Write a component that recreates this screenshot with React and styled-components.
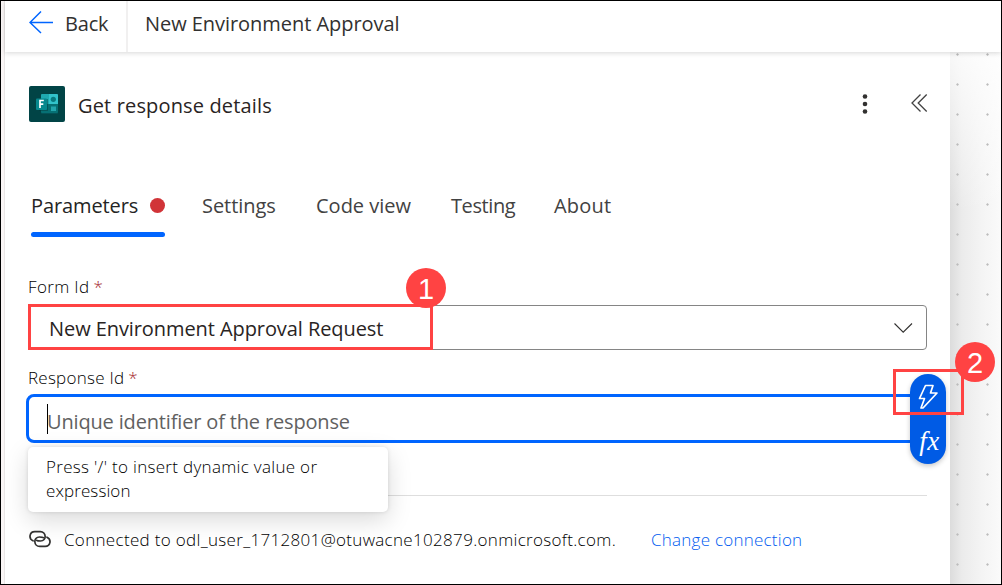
import React from "react";
import styled, { createGlobalStyle } from "styled-components";

const GlobalStyle = createGlobalStyle`
  * { box-sizing: border-box; }
  body { margin: 0; background: #fff; font-family: "Open Sans", "Noto Sans", sans-serif; }
`;

const Frame = styled.div`
  width: 1002px;
  height: 585px;
  overflow: hidden;
  border: 1px solid #000;
  padding-left: 4px;
  background: linear-gradient(90deg, #faf6f6 0 3px, #e9e6e6 3px 4px, #fff 4px);
  display: flex;
  flex-direction: column;
`;

const Text = styled.span`
  font-size: ${(p) => p.$size || 20}px;
  letter-spacing: ${(p) => p.$ls || 0}px;
  color: ${(p) => p.$color || "#323130"};
  font-weight: ${(p) => p.$weight || 400};
  line-height: 24px;
  white-space: nowrap;
`;

const SmallText = styled(Text)`
  font-size: 17px;
  font-weight: 300;
  color: ${(p) => p.$color || "#000"};
`;

const TopBar = styled.header`
  position: relative;
  z-index: 1;
  flex: none;
  height: 51px;
  display: flex;
  background: #fff;
  box-shadow: 0 1px 5px rgba(0, 0, 0, 0.16);
`;

const BackLink = styled.div`
  width: 123px;
  padding: 10px 0 0 24px;
  display: flex;
  gap: 12px;
  border-right: 2px solid #f1f0f0;

  ${Text} { padding-top: 1px; }
`;

const FlowTitle = styled.div`
  padding: 11px 0 0 17px;
  display: flex;
`;

const Body = styled.div`
  flex: 1;
  display: flex;
`;

const Canvas = styled.div`
  flex: 1;
  background:
    radial-gradient(circle at 1.5px 1.5px, #bdbdbd 0.8px, transparent 1.5px) 6px 1px / 30px 30px,
    linear-gradient(180deg, rgba(255, 255, 255, 0.8), rgba(255, 255, 255, 0) 160px),
    linear-gradient(90deg, #dcdcdc, #ebebeb 12px, #f4f4f4 32px, #fafafa 50px);
`;

const Panel = styled.main`
  width: 945px;
  padding: 34px 23px 0 24px;
  display: flex;
  flex-direction: column;
  background: #fff;
`;

const PanelHeader = styled.div`
  height: 36px;
  margin-right: -1px;
  display: flex;
  align-items: center;
`;

const PanelTitle = styled.div`
  flex: 1;
  display: flex;
  padding: 3px 0 0 13px;
`;

const PanelActions = styled.div`
  display: flex;
  gap: 42px;
`;

const Tabs = styled.nav`
  display: flex;
  height: 45px;
  margin: 70px 0 0 2px;
`;

const Tab = styled.div`
  width: ${(p) => p.$width}px;
  margin-right: ${(p) => p.$gap}px;
  height: 45px;
  padding-top: 2px;
  display: flex;
  justify-content: space-between;
`;

const ActiveTab = styled(Tab)`
  flex-wrap: wrap;
  align-content: space-between;
`;

const Underline = styled.div`
  width: 100%;
  height: 5px;
  border-radius: 3px;
  background: #0065ff;
`;

const ErrorDot = styled.i`
  width: 15px;
  height: 15px;
  margin-top: 4px;
  border-radius: 50%;
  background: #d13438;
`;

const Label = styled.label`
  display: flex;
  gap: 4px;
  height: 24px;
  margin: ${(p) => p.$top}px 0 0 -1px;
`;

const Select = styled.div`
  position: relative;
  height: 45px;
  margin: 6px 0 0 -1px;
  padding: 2px 13px 0 20px;
  display: flex;
  align-items: center;
  justify-content: space-between;
  border: 1px solid #858585;
  border-radius: 4px;
`;

const Editor = styled.div`
  position: relative;
  height: 49px;
  margin: 4px 0 0 -3px;
  padding: 6px 0 0 18px;
  display: flex;
  border: 3px solid #0065ff;
  border-radius: 8px;
`;

const Caret = styled.i`
  width: 1px;
  height: 30px;
  margin: 1px -1px 0 0;
  background: #000;
`;

const Placeholder = styled.div`
  display: flex;
  padding-top: 7px;
`;

const Highlight = styled.div`
  position: absolute;
  left: ${(p) => p.$x}px;
  top: ${(p) => p.$y}px;
  width: ${(p) => p.$w}px;
  height: ${(p) => p.$h}px;
  border: 3px solid #ff4343;
  z-index: 3;
`;

const Badge = styled.div`
  position: absolute;
  left: ${(p) => p.$x}px;
  top: ${(p) => p.$y}px;
  width: 40px;
  height: 40px;
  border-radius: 50%;
  background: #ff4343;
  color: #fff;
  font: 29px/42px "Liberation Sans", Arial, sans-serif;
  text-align: center;
  z-index: 4;
`;

const TokenPill = styled.div`
  position: absolute;
  left: 881px;
  top: -23px;
  width: 36px;
  height: 90px;
  padding: 8px 0 11px;
  display: flex;
  flex-direction: column;
  justify-content: space-between;
  align-items: center;
  border-radius: 18px;
  background: #005be5;
  box-shadow: 0 2px 5px rgba(0, 0, 0, 0.22);
  z-index: 2;
`;

const FxGlyph = styled.span`
  padding-left: 3px;
  font: italic 27px/24px "Liberation Serif", "Times New Roman", serif;
  letter-spacing: 0.5px;
  color: #fff;
`;

const Hint = styled.div`
  position: absolute;
  left: -1px;
  top: 50px;
  width: 360px;
  height: 65px;
  padding: 8px 18px;
  display: flex;
  flex-direction: column;
  border-radius: 5px;
  background: #fff;
  box-shadow: 0 8px 24px rgba(0, 0, 0, 0.15), 0 0 4px rgba(0, 0, 0, 0.12);
  z-index: 1;
`;

const Divider = styled.hr`
  width: 100%;
  height: 1px;
  margin: 52px 0 0;
  border: 0;
  background: #dedede;
`;

const Connection = styled.div`
  margin-top: 32px;
  display: flex;
`;

const ConnectionText = styled.div`
  width: 600px;
  padding-left: 13px;
  display: flex;
`;

const BackArrow = () => (
  <svg width="24" height="24" viewBox="0 0 24 24" fill="none" stroke="#0065ff" strokeWidth="1.5">
    <path d="M24 11.5H1M12 .5L1 11.5L12 22" />
  </svg>
);

const FormsIcon = () => (
  <svg width="36" height="36" viewBox="0 0 36 36">
    <rect width="36" height="36" rx="2" fill="#014446" />
    <rect x="12" y="8" width="17" height="20" rx="1" fill="#035256" />
    <path d="M12 9q0-1 1-1h7v10h-8z" fill="#1fa9b0" />
    <path d="M20 8h8q1 0 1 1v9h-9z" fill="#32c3cb" />
    <path d="M12 18h17v8q0 1-1 1H13q-1 0-1-1z" fill="#067074" />
    <circle cx="24.3" cy="13.3" r="2.6" fill="#087b80" />
    <rect x="22" y="20.5" width="5" height="4.5" fill="#23a6ad" />
    <rect x="10" y="13" width="9" height="12" fill="#02383a" opacity=".45" />
    <rect x="7" y="12.5" width="11" height="11.5" rx="1" fill="#07888e" />
    <path d="M11 22v-7.5h3.8M11 18.2h3.3" fill="none" stroke="#fff" strokeWidth="1.7" />
  </svg>
);

const MoreIcon = () => (
  <svg width="6" height="22" viewBox="0 0 6 22" fill="#323130">
    <circle cx="3" cy="3.5" r="2.3" />
    <circle cx="3" cy="11" r="2.3" />
    <circle cx="3" cy="18.5" r="2.3" />
  </svg>
);

const CollapseIcon = () => (
  <svg width="18" height="22" viewBox="0 0 18 22" fill="none" stroke="#424242" strokeWidth="1.3">
    <path d="M10.5 1.5L2 10l8.5 8.5M16.7 1.5L8.2 10l8.5 8.5" />
  </svg>
);

const ChevronIcon = () => (
  <svg width="20" height="12" viewBox="0 0 20 12" fill="none" stroke="#323130" strokeWidth="1.1">
    <path d="M1.5 0.5l8.7 8.7L19 0.5" />
  </svg>
);

const BoltIcon = () => (
  <svg width="22" height="28" viewBox="0 0 22 28" fill="none" stroke="#fff" strokeWidth="1.7" strokeLinejoin="round">
    <path d="M8.5 3.5h7.5L13.500 11h6.500L6 26H4l3.500-9.500H2.500z" />
  </svg>
);

const linkLoop = "M4 12.8C-.8 10.500 .5 3.600 5.800 3.600h5.400C17.500 3.600 18 13 11.500 13C10 13 8.500 13 7.700 12.300";

const LinkIcon = () => (
  <svg width="22" height="24" viewBox="0 0 22 24" fill="none" stroke="#323130" strokeWidth="1.7" strokeLinecap="round">
    <path d={linkLoop} />
    <path d={linkLoop} transform="rotate(180 11 11)" />
  </svg>
);

const tabs = [
  { name: "Settings", width: 74, gap: 40, ls: -0.05 },
  { name: "Code view", width: 95, gap: 40, ls: 0 },
  { name: "Testing", width: 64, gap: 39, ls: -0.4 },
  { name: "About", width: 57, gap: 0, ls: 0.2 },
];

const FieldLabel = ({ children, top, ls }) => (
  <Label $top={top}>
    <SmallText $ls={ls}>{children}</SmallText>
    <SmallText $color="#a4262c">*</SmallText>
  </Label>
);

export default function App() {
  return (
    <Frame>
      <GlobalStyle />
      <TopBar>
        <BackLink>
          <BackArrow />
          <Text $ls={-0.2}>Back</Text>
        </BackLink>
        <FlowTitle>
          <Text $ls={-0.05}>New Environment Approval</Text>
        </FlowTitle>
      </TopBar>
      <Body>
        <Panel>
          <PanelHeader>
            <FormsIcon />
            <PanelTitle>
              <Text $color="#292423" $ls={0.15}>Get response details</Text>
            </PanelTitle>
            <PanelActions>
              <MoreIcon />
              <CollapseIcon />
            </PanelActions>
          </PanelHeader>
          <Tabs>
            <ActiveTab $width={134} $gap={37}>
              <Text $color="#242424" $weight={500} $ls={-0.1}>Parameters</Text>
              <ErrorDot />
              <Underline />
            </ActiveTab>
            {tabs.map((t) => (
              <Tab key={t.name} $width={t.width} $gap={t.gap}>
                <Text $ls={t.ls} $color="#424242">{t.name}</Text>
              </Tab>
            ))}
          </Tabs>
          <FieldLabel top={38} ls={0.35}>Form Id</FieldLabel>
          <Select>
            <Text $color="#292423" $ls={-0.08}>New Environment Approval Request</Text>
            <ChevronIcon />
            <Highlight $x={-1} $y={-2} $w={405} $h={46} />
            <Badge $x={377} $y={-38}>1</Badge>
          </Select>
          <FieldLabel top={16} ls={0.25}>Response Id</FieldLabel>
          <Editor>
            <Caret />
            <Placeholder>
              <Text $color="#616161" $ls={-0.16}>Unique identifier of the response</Text>
            </Placeholder>
            <Hint>
              <SmallText $ls={0.31}>Press '/' to insert dynamic value or</SmallText>
              <SmallText $ls={0.1}>expression</SmallText>
            </Hint>
            <TokenPill>
              <BoltIcon />
              <FxGlyph>fx</FxGlyph>
            </TokenPill>
            <Highlight $x={864} $y={-28} $w={71} $h={46} />
            <Badge $x={926} $y={-55}>2</Badge>
          </Editor>
          <Divider />
          <Connection>
            <LinkIcon />
            <ConnectionText>
              <SmallText $ls={0.32}>Connected to odl_user_1712801@otuwacne102879.onmicrosoft.com.</SmallText>
            </ConnectionText>
            <SmallText $color="#005cf0" $ls={0.24}>Change connection</SmallText>
          </Connection>
        </Panel>
        <Canvas />
      </Body>
    </Frame>
  );
}
